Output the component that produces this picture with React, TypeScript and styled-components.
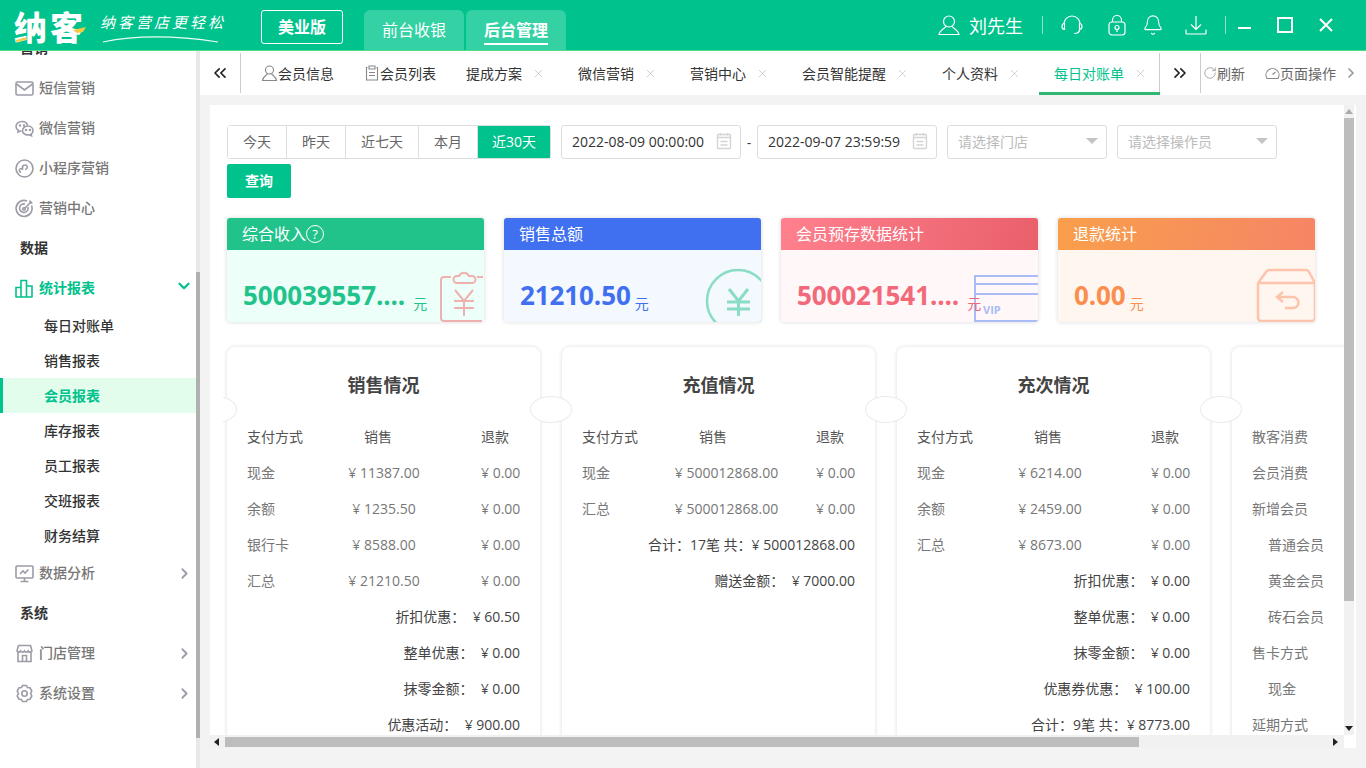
import React, { ReactNode } from 'react'
import styled, { createGlobalStyle } from 'styled-components'
import { ChevronDown, ChevronRight, Bell, X, ChevronsLeft, ChevronsRight, RotateCw } from 'lucide-react'

const GREEN = '#00c28c'

const GlobalStyle = createGlobalStyle`
  html, body {
    margin: 0;
    padding: 0;
    font-family: "Open Sans", "Noto Sans CJK SC", sans-serif;
    font-size: 14px;
    overflow: hidden;
  }
  *, *::before, *::after { box-sizing: border-box; }
`

const Shell = styled.div`
  width: 1366px;
  height: 768px;
  display: flex;
  flex-direction: column;
  overflow: hidden;
  background: #f3f3f3;
`

/* ---------- header ---------- */
const Header = styled.header`
  height: 51px;
  flex: none;
  display: flex;
  align-items: flex-start;
  background: ${GREEN};
  border-bottom: 1px solid #4fdc85;
  color: #fff;
`
const Logo = styled.div`
  width: 261px;
  height: 50px;
  padding: 5px 0 0 14px;
  display: flex;
  gap: 13px;
  flex: none;
`
const LogoMark = styled.span`
  position: relative;
  font-size: 33px;
  line-height: 38px;
  padding-top: 4px;
  font-weight: 900;
  letter-spacing: 3px;
  width: 73px;
  white-space: nowrap;
`
const LogoAccent = styled.svg`
  position: absolute;
  left: 0;
  top: 0;
  width: 74px;
  height: 40px;
`
const Slogan = styled.div`
  position: relative;
  font-size: 15px;
  line-height: 24px;
  font-style: italic;
  letter-spacing: 3px;
  white-space: nowrap;
  padding-top: 5px;
`
const Swoosh = styled.svg`
  position: absolute;
  left: 2px;
  top: 30px;
  width: 118px;
  height: 10px;
`
const Edition = styled.div`
  width: 82px;
  height: 34px;
  margin-top: 10px;
  border: 1px solid #fff;
  border-radius: 3px;
  font-size: 16px;
  font-weight: 700;
  line-height: 32px;
  text-align: center;
  flex: none;
`
const ModeTabs = styled.div`
  display: flex;
  gap: 2px;
  margin: 10px 0 0 21px;
  flex: none;
`
const ModeTab = styled.div<{ $active?: boolean }>`
  width: 100px;
  height: 40px;
  background: #33d1a4;
  border-radius: 6px 6px 0 0;
  font-size: 16px;
  font-weight: ${(p) => (p.$active ? 700 : 400)};
  text-align: center;
  padding-top: 8px;
  line-height: 24px;
  span {
    display: inline-block;
    height: 27px;
    border-bottom: ${(p) => (p.$active ? '2px solid #fff' : 'none')};
  }
`
const HeaderRight = styled.div`
  margin-left: auto;
  height: 50px;
  display: flex;
  align-items: center;
  padding-right: 32px;
`
const UserName = styled.span`
  font-size: 18px;
  margin: 0 19px 0 9px;
`
const HeaderDivider = styled.i`
  width: 1px;
  height: 18px;
  background: rgba(255, 255, 255, 0.55);
`
const HeadIcon = styled.svg<{ $left: number }>`
  width: 22px;
  height: 22px;
  margin-left: ${(p) => p.$left}px;
  fill: none;
  stroke: #fff;
  stroke-width: 1.2;
  flex: none;
`
const WinIcon = styled.svg<{ $left: number }>`
  width: 16px;
  height: 16px;
  margin-left: ${(p) => p.$left}px;
  fill: none;
  stroke: #fff;
  stroke-width: 2;
  flex: none;
`

/* ---------- sidebar ---------- */
const Body = styled.div`
  flex: 1;
  min-height: 0;
  display: flex;
`
const Sidebar = styled.aside`
  width: 200px;
  flex: none;
  display: flex;
  background: #fff;
`
const SideList = styled.nav`
  width: 196px;
  overflow: hidden;
`
const SideInner = styled.div`
  margin-top: -23px;
`
const SideScroll = styled.div`
  width: 4px;
  background: #e8e8e8;
  padding-top: 221px;
  &::after {
    content: '';
    display: block;
    height: 466px;
    background: #b0b0b0;
  }
`
const GroupLabel = styled.div`
  height: 40px;
  line-height: 40px;
  padding-left: 20px;
  font-weight: 700;
  color: #333;
`
const SideItem = styled.div<{ $open?: boolean }>`
  height: 40px;
  display: flex;
  align-items: center;
  padding: 0 6px 2px 15px;
  color: ${(p) => (p.$open ? GREEN : '#777')};
  font-weight: 500;
  span {
    margin-left: 5px;
    flex: 1;
    font-weight: ${(p) => (p.$open ? 700 : 500)};
  }
  svg:first-child {
    margin-top: 2px;
  }
`
const SideIcon = styled.svg`
  width: 19px;
  height: 19px;
  flex: none;
  fill: none;
  stroke: #9c9ca8;
  stroke-width: 1.6;
`
const SubItem = styled.div<{ $active?: boolean }>`
  height: 35px;
  line-height: 35px;
  padding-left: ${(p) => (p.$active ? 41 : 44)}px;
  color: ${(p) => (p.$active ? GREEN : '#333')};
  font-weight: ${(p) => (p.$active ? 700 : 500)};
  background: ${(p) => (p.$active ? '#e3fdec' : 'transparent')};
  border-left: ${(p) => (p.$active ? `3px solid ${GREEN}` : 'none')};
`

/* ---------- tabs ---------- */
const Main = styled.main`
  flex: 1;
  min-width: 0;
  display: flex;
  flex-direction: column;
`
const TabBar = styled.div`
  height: 44px;
  flex: none;
  background: #fff;
  display: flex;
  color: #333;
  white-space: nowrap;
  overflow: hidden;
`
const TabArrow = styled.div<{ $width: number }>`
  width: ${(p) => p.$width}px;
  height: 40px;
  margin-top: 2px;
  flex: none;
  display: flex;
  align-items: center;
  justify-content: center;
  border-right: 1px solid #ccc;
  color: #222;
`
const TabList = styled.div`
  width: 919px;
  padding-left: 5px;
  flex: none;
  display: flex;
  gap: 4px;
  border-right: 1px solid #ccc;
  height: 40px;
  margin-top: 2px;
`
const Tab = styled.div<{ $active?: boolean; $pinned?: boolean }>`
  height: 42px;
  display: flex;
  align-items: center;
  padding: 0 ${(p) => (p.$pinned ? 11 : p.$active ? 13 : 14)}px 0 15px;
  flex: none;
  color: ${(p) => (p.$active ? GREEN : '#333')};
  border-bottom: ${(p) => (p.$active ? '3px solid #2fb673' : '3px solid transparent')};
`
const TabClose = styled(X)`
  width: 13px;
  height: 13px;
  margin: 2px 0 0 10px;
  color: #c8c8c8;
  stroke-width: 1.5;
`
const TabIcon = styled.svg<{ $width: number }>`
  width: ${(p) => p.$width}px;
  height: 16px;
  flex: none;
  fill: none;
  stroke: #888;
  stroke-width: 1.1;
`
const TabAction = styled.div<{ $width: number }>`
  width: ${(p) => p.$width}px;
  height: 40px;
  flex: none;
  display: flex;
  align-items: center;
  color: #666;
  margin-top: 2px;
`

/* ---------- panel + fake scrollbars ---------- */
const Panel = styled.div`
  flex: 1;
  min-height: 0;
  margin: 10px 10px 20px;
  background: #fff;
  display: grid;
  grid-template-columns: 1fr 12px;
  grid-template-rows: 1fr 13px;
`
const Viewport = styled.div`
  overflow: hidden;
  padding: 20px 0 0 17px;
  position: relative;
`
const VBar = styled.div`
  width: 10px;
  background: #f1f1f1;
  display: flex;
  flex-direction: column;
  align-items: center;
  justify-content: space-between;
`
const VThumb = styled.div`
  width: 10px;
  height: 483px;
  background: #bdbdbd;
  margin-top: 13px;
  margin-bottom: auto;
`
const HBar = styled.div`
  background: #f1f1f1;
  display: flex;
  align-items: center;
  padding: 0 6px 0 4px;
`
const HThumb = styled.div`
  width: 914px;
  height: 10px;
  margin-left: 6px;
  margin-right: auto;
  background: #bdbdbd;
`
const Triangle = styled.i<{ $dir: 'up' | 'down' | 'left' | 'right' }>`
  width: 0;
  height: 0;
  border-style: solid;
  border-color: transparent;
  ${(p) =>
    p.$dir === 'left'
      ? 'border-width: 4px 5px 4px 0; border-right-color: #222;'
      : p.$dir === 'right'
      ? 'border-width: 4px 0 4px 5px; border-left-color: #222;'
      : p.$dir === 'up'
      ? 'border-width: 0 4px 5px; border-bottom-color: #aaa; position: absolute; margin-top: 4px;'
      : 'border-width: 5px 4px 0; border-top-color: #222; margin-bottom: 4px;'}
`

/* ---------- filters ---------- */
const Filters = styled.div`
  width: 1110px;
  display: flex;
  flex-wrap: wrap;
  align-items: center;
  gap: 5px 10px;
`
const RangeGroup = styled.div`
  display: flex;
  height: 34px;
  border: 1px solid #ddd;
  border-radius: 3px;
`
const RangeBtn = styled.div<{ $active?: boolean; $width: number }>`
  width: ${(p) => p.$width}px;
  text-align: center;
  line-height: 32px;
  color: ${(p) => (p.$active ? '#fff' : '#666')};
  background: ${(p) => (p.$active ? GREEN : '#fff')};
  & + & {
    border-left: 1px solid #ddd;
  }
`
const Field = styled.div<{ $width: number }>`
  width: ${(p) => p.$width}px;
  height: 34px;
  border: 1px solid #ddd;
  border-radius: 3px;
  padding: 0 8px 2px 10px;
  display: flex;
  align-items: center;
  justify-content: space-between;
  color: #333;
`
const Placeholder = styled.span`
  color: #bbb;
`
const Caret = styled.i`
  width: 0;
  height: 0;
  border-style: solid;
  border-width: 6px 6.5px 0;
  border-color: #c4c4c4 transparent transparent;
  margin-right: 0;
`
const RangeDash = styled.span`
  color: #444;
  margin: 0 -6px;
  width: 8px;
  text-align: center;
`
const Query = styled.div`
  width: 64px;
  height: 34px;
  background: ${GREEN};
  color: #fff;
  font-weight: 700;
  text-align: center;
  line-height: 34px;
  border-radius: 2px;
`

/* ---------- stat cards ---------- */
const StatRow = styled.div`
  display: flex;
  gap: 20px;
  margin-top: 20px;
`
const StatCard = styled.div<{ $bg: string }>`
  width: 257px;
  height: 104px;
  border-radius: 3px;
  background: ${(p) => p.$bg};
  box-shadow: 0 0 4px rgba(0, 0, 0, 0.16);
  overflow: hidden;
`
const StatHead = styled.div<{ $bg: string }>`
  height: 32px;
  background: ${(p) => p.$bg};
  color: #fff;
  font-size: 16px;
  line-height: 32px;
  padding-left: 15px;
  display: flex;
  align-items: center;
`
const StatBody = styled.div<{ $color: string; $gap: number }>`
  position: relative;
  height: 72px;
  padding: 26px 0 0 16px;
  color: ${(p) => p.$color};
  display: flex;
  align-items: flex-start;
  b {
    font-size: 26px;
    line-height: 38px;
    font-weight: 700;
    white-space: nowrap;
    letter-spacing: -0.1px;
  }
  small {
    font-size: 14px;
    margin: 18px 0 0 ${(p) => p.$gap}px;
    line-height: 20px;
    position: relative;
    z-index: 1;
  }
`
const Help = styled.i`
  width: 18px;
  height: 18px;
  border: 1px solid #fff;
  border-radius: 50%;
  font-style: normal;
  font-size: 13px;
  line-height: 16px;
  text-align: center;
`
const StatArt = styled.svg`
  position: absolute;
  right: 0;
  top: 0;
  width: 90px;
  height: 72px;
  fill: none;
`

/* ---------- table cards ---------- */
const CardRow = styled.div`
  display: flex;
  gap: 22px;
  margin-top: 25px;
  width: 1400px;
`
const TableCard = styled.section`
  position: relative;
  width: 313px;
  height: 430px;
  flex: none;
  padding: 0 20px;
  border-radius: 8px 8px 0 0;
  box-shadow: 0 0 4px rgba(0, 0, 0, 0.14);
  &::before,
  &::after {
    content: '';
    position: absolute;
    top: 49px;
    width: 41px;
    height: 27px;
    border-radius: 50%;
    background: #fff;
    border: 1px solid #ebebeb;
  }
  &::before {
    left: -31px;
    clip-path: inset(0 0 0 27px);
  }
  &::after {
    right: -31px;
  }
`
const CardTitle = styled.h3`
  margin: 0 0 16px;
  padding-top: 20px;
  font-size: 18px;
  line-height: 36px;
  height: 56px;
  font-weight: 700;
  text-align: center;
  color: #444;
`
const Row = styled.div<{ $nameCol: number }>`
  display: grid;
  grid-template-columns: ${(p) => p.$nameCol}px ${(p) => 234 - p.$nameCol}px 40px;
  height: 36px;
  line-height: 36px;
  color: #777;
  white-space: nowrap;
`
const HeadRow = styled(Row)`
  color: #555;
`
const Amount = styled.span`
  text-align: center;
`
const Summary = styled.div`
  width: 274px;
  height: 36px;
  line-height: 36px;
  text-align: right;
  color: #444;
  white-space: pre;
  padding-right: 1px;
`
const Plain = styled.div<{ $indent?: boolean }>`
  height: 36px;
  line-height: 36px;
  color: #777;
  padding-left: ${(p) => (p.$indent ? 16 : 0)}px;
`

/* ---------- icons ---------- */
const MailIcon = () => (
  <SideIcon viewBox="0 0 19 19">
    <rect x="1" y="3" width="17" height="13" rx="1.5" />
    <path d="M1.5 5l8 6 8-6" />
  </SideIcon>
)
const WechatIcon = () => (
  <SideIcon viewBox="0 0 19 19" strokeWidth="1.2">
    <path d="M12.5 6.5C12 3.8 9.7 2.5 7 2.5 3.7 2.5 1 4.7 1 7.5c0 1.600.9 3 2.3 3.900L3 13l2-1c.5.100 1 .2 1.500.2" />
    <path d="M18 11.500c0-2.500-2.300-4.500-5.200-4.500s-5.300 2-5.300 4.500 2.400 4.500 5.300 4.500c.6 0 1.100-.1 1.700-.2l2 1-.3-1.700c1-.8 1.800-2.100 1.800-3.600z" />
    <circle cx="11" cy="11" r=".5" />
    <circle cx="15" cy="11" r=".5" />
    <circle cx="5" cy="6.5" r=".5" />
    <circle cx="9" cy="6.5" r=".5" />
  </SideIcon>
)
const MiniIcon = () => (
  <SideIcon viewBox="0 0 19 19" strokeWidth="1.3">
    <circle cx="9.5" cy="9.5" r="8.5" />
    <path d="M6 13.500a2 2 0 0 1-1-3.500c1-.9 2.500-.3 2.500 1V8.500a2.500 2.500 0 0 1 2.500-2.500 2.200 2.200 0 0 1 2 3.300c-.5.800-1.300 1-2 1" />
  </SideIcon>
)
const TargetIcon = () => (
  <SideIcon viewBox="0 0 19 19">
    <path d="M16.5 6.500A8 8 0 1 1 12 2" />
    <path d="M13 8a4.300 4.300 0 1 1-3-3" />
    <circle cx="9" cy="10" r="1.3" />
    <path d="M9.5 9.500L16.500 2.500M15 1.500v2.500h2.500" />
  </SideIcon>
)
const BarsIcon = () => (
  <SideIcon viewBox="0 0 19 19" style={{ stroke: GREEN }}>
    <path d="M1 18V8.500h5V18M6 18V1.500h5.500V18M11.500 18V7h5.500v11M.5 18h17" />
  </SideIcon>
)
const MonitorIcon = () => (
  <SideIcon viewBox="0 0 19 19">
    <rect x="1" y="2" width="17" height="12" rx="1" />
    <path d="M9.5 14v3.500M5.500 17.500h8M5 10l3-3 2 2 3.500-3.500" />
  </SideIcon>
)
const StoreIcon = () => (
  <SideIcon viewBox="0 0 19 19">
    <path d="M3 8v9.500h13V8M2 7l1.500-5.500h12L17 7c-1 1.500-3 1.500-3.800 0-.8 1.500-3 1.500-3.700 0-.8 1.500-3 1.500-3.700 0C5 8.500 3 8.500 2 7zM7.500 17v-5.500h4V17" />
  </SideIcon>
)
const GearIcon = () => (
  <SideIcon viewBox="0 0 19 19">
    <path d="M7.5 1.500h4l1 2 2.500.3 1.800 3.200-1.200 2.500 1.200 2.500-1.800 3.200-2.500.3-1 2h-4l-1-2-2.500-.3-1.800-3.200L3.400 9.500 2.200 7 4 3.800l2.500-.3z" />
    <circle cx="9.5" cy="9.5" r="2.7" />
  </SideIcon>
)
const Calendar = () => (
  <svg width="16" height="18" viewBox="0 0 16 18" fill="none" stroke="#d4d4d4" strokeWidth="1.4">
    <rect x="1.5" y="2.5" width="13" height="14" rx="1" />
    <path d="M1.5 5.500h13M4.500 1v2.500M11.500 1v2.500M4.500 9.500h7M4.500 13h7" />
  </svg>
)

const ClipboardArt = () => (
  <StatArt viewBox="0 0 90 72" stroke="#eeb1ae" strokeWidth="2">
    <path d="M57 27h-7a3 3 0 0 0-3 3v38a3 3 0 0 0 3 3h38M83 27h6" />
    <path d="M63 33a3.500 3.500 0 0 1 0-7h2a5.500 5.500 0 0 1 10 0h3a3.500 3.500 0 0 1 0 7z" />
    <path d="M61 40l9 11 9-11M60 51h20M60 58h20M70 51v15" />
  </StatArt>
)
const CoinArt = () => (
  <StatArt viewBox="0 0 90 72" stroke="#8adcc5" strokeWidth="2.5">
    <circle cx="67" cy="51" r="31" />
    <path d="M58 39l9.500 12 9.500-12M56 52h23M56 59h23M67.500 52v14" strokeWidth="3" />
  </StatArt>
)
const CardArt = () => (
  <StatArt viewBox="0 0 90 72" stroke="#a9bcf5" strokeWidth="2">
    <path d="M90 26H27v45h63M27 34h63M27 44h63" />
    <text x="35" y="64" fill="#a9bcf5" stroke="none" fontSize="11" fontWeight="700">
      VIP
    </text>
  </StatArt>
)
const BoxArt = () => (
  <StatArt viewBox="0 0 90 72" stroke="#fdc4ab" strokeWidth="2.5">
    <path d="M33 33v35a3 3 0 0 0 3 3h51a3 3 0 0 0 3-3V33M33 33l8-11a4 4 0 0 1 3-2h37a4 4 0 0 1 3 2l6 11M33 33h57" />
    <path d="M58 42l-6 5 6 5M52 47h16a5.500 5.500 0 0 1 0 11h-8" />
  </StatArt>
)

/* ---------- data ---------- */
const ranges = [
  { label: '今天', width: 58 },
  { label: '昨天', width: 59 },
  { label: '近七天', width: 73 },
  { label: '本月', width: 59 },
  { label: '近30天', width: 73, active: true },
]

const stats: {
  title: ReactNode
  value: string
  gap: number
  bg: string
  head: string
  color: string
  art: ReactNode
}[] = [
  {
    title: (
      <>
        综合收入<Help>?</Help>
      </>
    ),
    value: '500039557....',
    gap: 8,
    bg: '#edfff9',
    head: '#22c38b',
    color: '#22c38b',
    art: <ClipboardArt />,
  },
  { title: '销售总额', value: '21210.50', gap: 4, bg: '#f4f8ff', head: '#4070f0', color: '#4070f0', art: <CoinArt /> },
  {
    title: '会员预存数据统计',
    value: '500021541....',
    gap: 8,
    bg: '#fff7f8',
    head: 'linear-gradient(100deg, #ff808e, #e9606b)',
    color: '#f2697a',
    art: <CardArt />,
  },
  {
    title: '退款统计',
    value: '0.00',
    gap: 4,
    bg: '#fff6f0',
    head: 'linear-gradient(100deg, #f99f4b, #f58566)',
    color: '#fb8e4f',
    art: <BoxArt />,
  },
]

const tables = [
  {
    title: '销售情况',
    nameCol: 40,
    rows: [
      ['现金', '¥ 11387.00', '¥ 0.00'],
      ['余额', '¥ 1235.50', '¥ 0.00'],
      ['银行卡', '¥ 8588.00', '¥ 0.00'],
      ['汇总', '¥ 21210.50', '¥ 0.00'],
    ],
    summary: ['折扣优惠：  ¥ 60.50', '整单优惠：  ¥ 0.00', '抹零金额：  ¥ 0.00', '优惠活动：  ¥ 900.00'],
  },
  {
    title: '充值情况',
    nameCol: 55,
    rows: [
      ['现金', '¥ 500012868.00', '¥ 0.00'],
      ['汇总', '¥ 500012868.00', '¥ 0.00'],
    ],
    summary: ['合计：17笔 共：¥ 500012868.00', '赠送金额：  ¥ 7000.00'],
  },
  {
    title: '充次情况',
    nameCol: 32,
    rows: [
      ['现金', '¥ 6214.00', '¥ 0.00'],
      ['余额', '¥ 2459.00', '¥ 0.00'],
      ['汇总', '¥ 8673.00', '¥ 0.00'],
    ],
    summary: [
      '折扣优惠：  ¥ 0.00',
      '整单优惠：  ¥ 0.00',
      '抹零金额：  ¥ 0.00',
      '优惠券优惠：  ¥ 100.00',
      '合计：9笔 共：¥ 8773.00',
    ],
  },
]

const consume: [string, boolean?][] = [
  ['散客消费'],
  ['会员消费'],
  ['新增会员'],
  ['普通会员', true],
  ['黄金会员', true],
  ['砖石会员', true],
  ['售卡方式'],
  ['现金', true],
  ['延期方式'],
]

const closableTabs = ['提成方案', '微信营销', '营销中心', '会员智能提醒', '个人资料']
const reportLinks = ['每日对账单', '销售报表', '会员报表', '库存报表', '员工报表', '交班报表', '财务结算']

const Arrow = styled(ChevronRight)`
  width: 17px;
  height: 17px;
  margin: 2px -3px 0 0;
  color: #9c9ca8;
  stroke-width: 2.6;
`
const OpenArrow = styled(ChevronDown)`
  width: 18px;
  height: 18px;
  color: ${GREEN};
  stroke-width: 3;
  margin: -3px -3px 0 0;
`

const App = () => (
  <Shell>
    <GlobalStyle />
    <Header>
      <Logo>
        <LogoMark>
          纳客
          <LogoAccent viewBox="0 0 74 40">
            <path d="M2 35l11-3-1 3-10 2zM59 25l13-3-3 5-6 1z" fill="#f6c945" />
          </LogoAccent>
        </LogoMark>
        <Slogan>
          纳客营店更轻松
          <Swoosh viewBox="0 0 118 10" fill="none" stroke="#e9fff6" strokeWidth="1.2">
            <path d="M1 7C30 1 70 0 116 7" />
          </Swoosh>
        </Slogan>
      </Logo>
      <Edition>美业版</Edition>
      <ModeTabs>
        <ModeTab>
          <span>前台收银</span>
        </ModeTab>
        <ModeTab $active>
          <span>后台管理</span>
        </ModeTab>
      </ModeTabs>
      <HeaderRight>
        <HeadIcon $left={0} viewBox="0 0 22 22">
          <circle cx="11" cy="7.5" r="5.5" />
          <path d="M8 12c0 2-6.500 3.500-7 8.500h20C20.500 15.500 14 14 14 12" />
        </HeadIcon>
        <UserName>刘先生</UserName>
        <HeaderDivider />
        <HeadIcon $left={18} viewBox="0 0 22 22">
          <path d="M3 10a8 8 0 0 1 16 0M3.500 9.500C2 9.500 1 10.500 1 12.500s1 3 2.500 3zM18.500 9.500c1.500 0 2.500 1 2.500 3s-1 3-2.500 3zM18.500 15.500c0 2.500-2 4-5.500 4" />
        </HeadIcon>
        <HeadIcon $left={23} viewBox="0 0 22 22">
          <rect x="3" y="8" width="16" height="13" rx="3" />
          <path d="M6.500 8V6a4.500 4.500 0 0 1 9 0v2" />
          <circle cx="11" cy="13.5" r="2" />
          <path d="M11 15.500v2.500" />
        </HeadIcon>
        <Bell size={22} strokeWidth={1.2} style={{ marginLeft: 14, flex: 'none' }} />
        <HeadIcon $left={21} viewBox="0 0 22 22">
          <path d="M11 2v13M6 10.500l5 5 5-5M1 15.500v3.500a1 1 0 0 0 1 1h18a1 1 0 0 0 1-1v-3.500" />
        </HeadIcon>
        <HeaderDivider style={{ marginLeft: 18 }} />
        <WinIcon $left={11} viewBox="0 0 16 16">
          <path d="M1 11h13" />
        </WinIcon>
        <WinIcon $left={24} viewBox="0 0 16 16">
          <rect x="1" y="1" width="14" height="14" />
        </WinIcon>
        <WinIcon $left={25} viewBox="0 0 16 16">
          <path d="M2 2l12 12M14 2L2 14" />
        </WinIcon>
      </HeaderRight>
    </Header>
    <Body>
      <Sidebar>
        <SideList>
          <SideInner>
            <GroupLabel>营销</GroupLabel>
            <SideItem>
              <MailIcon />
              <span>短信营销</span>
            </SideItem>
            <SideItem>
              <WechatIcon />
              <span>微信营销</span>
            </SideItem>
            <SideItem>
              <MiniIcon />
              <span>小程序营销</span>
            </SideItem>
            <SideItem>
              <TargetIcon />
              <span>营销中心</span>
            </SideItem>
            <GroupLabel>数据</GroupLabel>
            <SideItem $open>
              <BarsIcon />
              <span>统计报表</span>
              <OpenArrow />
            </SideItem>
            <div>
              {reportLinks.map((l) => (
                <SubItem key={l} $active={l === '会员报表'}>
                  {l}
                </SubItem>
              ))}
            </div>
            <SideItem>
              <MonitorIcon />
              <span>数据分析</span>
              <Arrow />
            </SideItem>
            <GroupLabel>系统</GroupLabel>
            <SideItem>
              <StoreIcon />
              <span>门店管理</span>
              <Arrow />
            </SideItem>
            <SideItem>
              <GearIcon />
              <span>系统设置</span>
              <Arrow />
            </SideItem>
          </SideInner>
        </SideList>
        <SideScroll />
      </Sidebar>
      <Main>
        <TabBar>
          <TabArrow $width={41}>
            <ChevronsLeft size={20} strokeWidth={2} />
          </TabArrow>
          <TabList>
            <Tab $pinned>
              <TabIcon $width={17} viewBox="0 0 17 16">
                <circle cx="8.5" cy="5" r="4" />
                <path d="M6.500 8.500C6 10.500 2 11 1.500 15.500h14C15 11 11 10.500 10.500 8.500" />
              </TabIcon>
              会员信息
            </Tab>
            <Tab $pinned>
              <TabIcon $width={16} viewBox="0 0 16 16">
                <path d="M3.500 2.500h-1v12.500h11V2.500h-1M5 1h6v3H5zM5 7.500h6M5 10.500h6" />
              </TabIcon>
              会员列表
            </Tab>
            {closableTabs.map((t) => (
              <Tab key={t}>
                {t}
                <TabClose />
              </Tab>
            ))}
            <Tab $active>
              每日对账单
              <TabClose />
            </Tab>
          </TabList>
          <TabArrow $width={41}>
            <ChevronsRight size={20} strokeWidth={2} />
          </TabArrow>
          <TabAction $width={64} style={{ paddingLeft: 2 }}>
            <RotateCw size={14} strokeWidth={1.2} color="#888" />
            刷新
          </TabAction>
          <TabAction $width={83}>
            <TabIcon $width={15} viewBox="0 0 15 16">
              <path d="M2 13.500a6.500 6.500 0 1 1 11 0zM7.500 9.500l3-2.500" />
            </TabIcon>
            页面操作
            <ChevronRight size={16} strokeWidth={2.6} color="#999" style={{ marginLeft: 7, flex: 'none' }} />
          </TabAction>
        </TabBar>
        <Panel>
          <Viewport>
            <Filters>
              <RangeGroup>
                {ranges.map((r) => (
                  <RangeBtn key={r.label} $width={r.width} $active={r.active}>
                    {r.label}
                  </RangeBtn>
                ))}
              </RangeGroup>
              <Field $width={180}>
                2022-08-09 00:00:00
                <Calendar />
              </Field>
              <RangeDash>-</RangeDash>
              <Field $width={180}>
                2022-09-07 23:59:59
                <Calendar />
              </Field>
              <Field $width={160}>
                <Placeholder>请选择门店</Placeholder>
                <Caret />
              </Field>
              <Field $width={160}>
                <Placeholder>请选择操作员</Placeholder>
                <Caret />
              </Field>
              <Query>查询</Query>
            </Filters>
            <StatRow>
              {stats.map((s) => (
                <StatCard key={s.value} $bg={s.bg}>
                  <StatHead $bg={s.head}>{s.title}</StatHead>
                  <StatBody $color={s.color} $gap={s.gap}>
                    <b>{s.value}</b>
                    <small>元</small>
                    {s.art}
                  </StatBody>
                </StatCard>
              ))}
            </StatRow>
            <CardRow>
              {tables.map((t) => (
                <TableCard key={t.title}>
                  <CardTitle>{t.title}</CardTitle>
                  <HeadRow $nameCol={28}>
                    <span>支付方式</span>
                    <Amount>销售</Amount>
                    <span>退款</span>
                  </HeadRow>
                  {t.rows.map((r) => (
                    <Row key={r[0]} $nameCol={t.nameCol}>
                      <span>{r[0]}</span>
                      <Amount>{r[1]}</Amount>
                      <span>{r[2]}</span>
                    </Row>
                  ))}
                  {t.summary.map((s) => (
                    <Summary key={s}>{s}</Summary>
                  ))}
                </TableCard>
              ))}
              <TableCard>
                <CardTitle>&nbsp;</CardTitle>
                {consume.map(([label, indent]) => (
                  <Plain key={label + String(indent)} $indent={indent}>
                    {label}
                  </Plain>
                ))}
              </TableCard>
            </CardRow>
          </Viewport>
          <VBar>
            <Triangle $dir="up" />
            <VThumb />
            <Triangle $dir="down" />
          </VBar>
          <HBar>
            <Triangle $dir="left" />
            <HThumb />
            <Triangle $dir="right" />
          </HBar>
        </Panel>
      </Main>
    </Body>
  </Shell>
)

export default App
